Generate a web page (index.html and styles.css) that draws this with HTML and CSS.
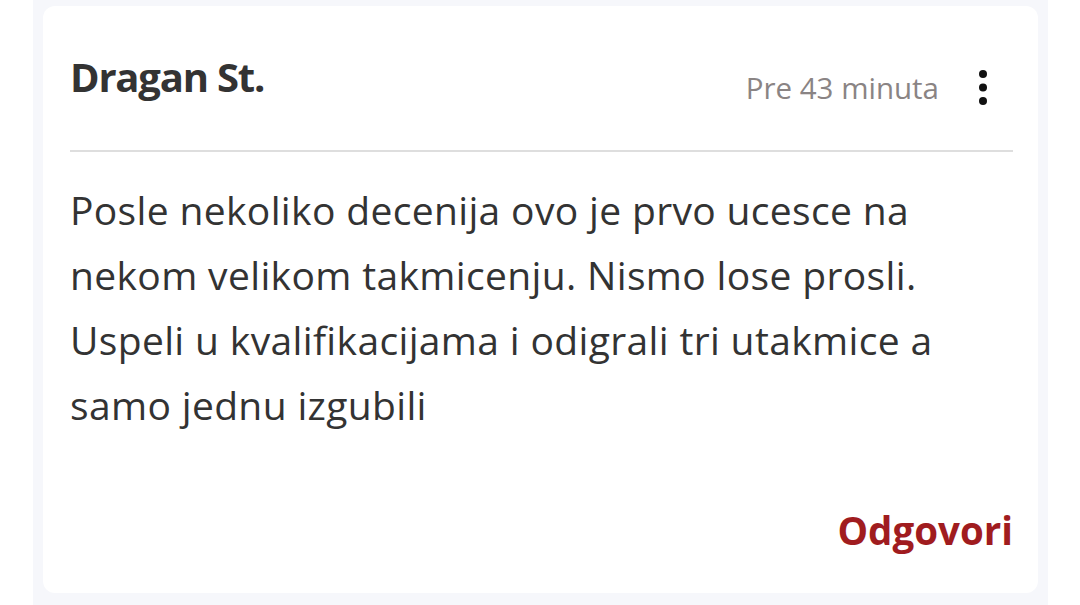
FILE: index.html
```html
<!DOCTYPE html>
<html lang="sr">
<head>
<meta charset="utf-8">
<title>Komentar</title>
<link rel="stylesheet" href="styles.css">
</head>
<body>
<div class="frame">
  <article class="card">
    <header class="head">
      <h2 class="name">Dragan St.</h2>
      <div class="meta">
        <span class="time">Pre 43 minuta</span>
        <button class="more" aria-label="Više opcija">
          <svg width="10" height="36" viewBox="0 0 10 36"><circle cx="5" cy="4" r="4"/><circle cx="5" cy="17.5" r="4"/><circle cx="5" cy="31" r="4"/></svg>
        </button>
      </div>
    </header>
    <p class="text">Posle nekoliko decenija ovo je prvo ucesce na nekom velikom takmicenju. Nismo lose prosli. Uspeli u kvalifikacijama i odigrali tri utakmice a samo jednu izgubili</p>
    <footer class="foot">
      <a class="reply" href="#">Odgovori</a>
    </footer>
  </article>
</div>
</body>
</html>
```

FILE: styles.css
```css
html, body {
  margin: 0;
  padding: 0;
  background: #ffffff;
}

body {
  width: 1080px;
  height: 605px;
  overflow: hidden;
  font-family: "Open Sans", "Noto Sans", sans-serif;
  color: #333333;
}

.frame {
  margin: 0 32px 0 33px;
  height: 605px;
  box-sizing: border-box;
  padding: 6px 10px 12px 10px;
  background: #f6f7fb;
}

.card {
  height: 100%;
  box-sizing: border-box;
  background: #ffffff;
  border-radius: 12px;
  padding: 46px 25px 0 27px;
  display: flex;
  flex-direction: column;
}

.head {
  display: flex;
  justify-content: space-between;
  align-items: flex-start;
  border-bottom: 2px solid #dedede;
  height: 100px;
  box-sizing: border-box;
  flex-shrink: 0;
}

.name {
  margin: 0;
  font-size: 40px;
  line-height: 50px;
  font-weight: 700;
  letter-spacing: -1.2px;
  color: #333333;
}

.meta {
  display: flex;
  align-items: center;
  gap: 39px;
  margin-top: 18px;
  margin-right: 25px;
}

.time {
  font-size: 29.5px;
  line-height: 36px;
  color: #8a8484;
}

.more {
  border: 0;
  padding: 0;
  background: none;
  display: flex;
  fill: #111111;
}

.text {
  margin: 25px 0 0 0;
  font-size: 39px;
  line-height: 65px;
  letter-spacing: 0.35px;
  color: #333333;
}

.foot {
  margin-top: auto;
  display: flex;
  justify-content: flex-end;
  padding-bottom: 40px;
}

.reply {
  font-size: 38.5px;
  line-height: 46px;
  font-weight: 700;
  color: #a01c1f;
  text-decoration: none;
}
```
